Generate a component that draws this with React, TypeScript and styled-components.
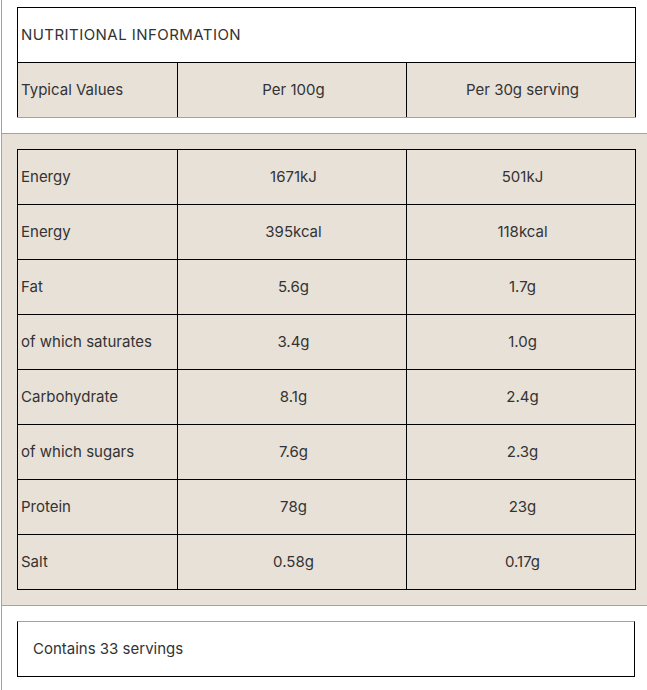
import React from "react";
import styled, { createGlobalStyle } from "styled-components";

const Global = createGlobalStyle`
  html, body { margin: 0; padding: 0; background: #fff; }
  body { font-family: Inter, "Open Sans", sans-serif; color: #333; }
`;

const Wrapper = styled.div`
  margin-left: 1px;
  border-left: 1px solid #a3a3a3;
  width: 646px;
  box-sizing: border-box;
`;

const Section = styled.section<{ $tone: "white" | "beige"; $top: number; $bottom: number; $divider?: boolean }>`
  background: ${(p) => (p.$tone === "beige" ? "#e8e1d8" : "#ffffff")};
  padding: ${(p) => `${p.$top}px 12px ${p.$bottom}px 15px`};
  border-bottom: ${(p) => (p.$divider ? "1px solid #a3a3a3" : "none")};
`;

const Table = styled.table`
  width: 618px;
  border-collapse: collapse;
  table-layout: fixed;
  font-size: 15px;
  color: #333;
`;

const Cell = styled.td<{ $align?: "left" | "center"; $greyBottom?: boolean }>`
  border: 1px solid #000;
  ${(p) => (p.$greyBottom ? "border-bottom-color: #a3a3a3;" : "")}
  height: 55px;
  padding: 0 0 2px 3px;
  text-align: ${(p) => p.$align ?? "center"};
  vertical-align: middle;
  background: #e8e1d8;
  box-sizing: border-box;
`;

const Title = styled.td`
  border: 1px solid #000;
  height: 55px;
  padding: 0 0 2px 3px;
  text-align: left;
  background: #fff;
  font-size: 15px;
  letter-spacing: 0.45px;
  text-transform: uppercase;
  box-sizing: border-box;
`;

const ServingsBox = styled.div`
  height: 56px;
  box-sizing: border-box;
  border: 1px solid #000;
  border-top-color: #a3a3a3;
  display: flex;
  align-items: center;
  padding: 0 0 2px 15px;
  font-size: 15px;
  color: #333;
  width: 618px;
`;

const rows: [string, string, string][] = [
  ["Energy", "1671kJ", "501kJ"],
  ["Energy", "395kcal", "118kcal"],
  ["Fat", "5.6g", "1.7g"],
  ["of which saturates", "3.4g", "1.0g"],
  ["Carbohydrate", "8.1g", "2.4g"],
  ["of which sugars", "7.6g", "2.3g"],
  ["Protein", "78g", "23g"],
  ["Salt", "0.58g", "0.17g"],
];

const ColGroup = () => (
  <colgroup>
    <col style={{ width: 160 }} />
    <col style={{ width: 229 }} />
    <col style={{ width: 229 }} />
  </colgroup>
);

export default function App() {
  return (
    <>
      <Global />
      <Wrapper>
        <Section $tone="white" $top={7} $bottom={15} $divider>
          <Table>
            <ColGroup />
            <tbody>
              <tr>
                <Title colSpan={3}>Nutritional Information</Title>
              </tr>
              <tr>
                <Cell $align="left" $greyBottom>Typical Values</Cell>
                <Cell $greyBottom>Per 100g</Cell>
                <Cell $greyBottom>Per 30g serving</Cell>
              </tr>
            </tbody>
          </Table>
        </Section>
        <Section $tone="beige" $top={15} $bottom={15} $divider>
          <Table>
            <ColGroup />
            <tbody>
              {rows.map(([name, a, b], i) => (
                <tr key={i}>
                  <Cell $align="left">{name}</Cell>
                  <Cell>{a}</Cell>
                  <Cell>{b}</Cell>
                </tr>
              ))}
            </tbody>
          </Table>
        </Section>
        <Section $tone="white" $top={15} $bottom={15}>
          <ServingsBox>Contains 33 servings</ServingsBox>
        </Section>
      </Wrapper>
    </>
  );
}
